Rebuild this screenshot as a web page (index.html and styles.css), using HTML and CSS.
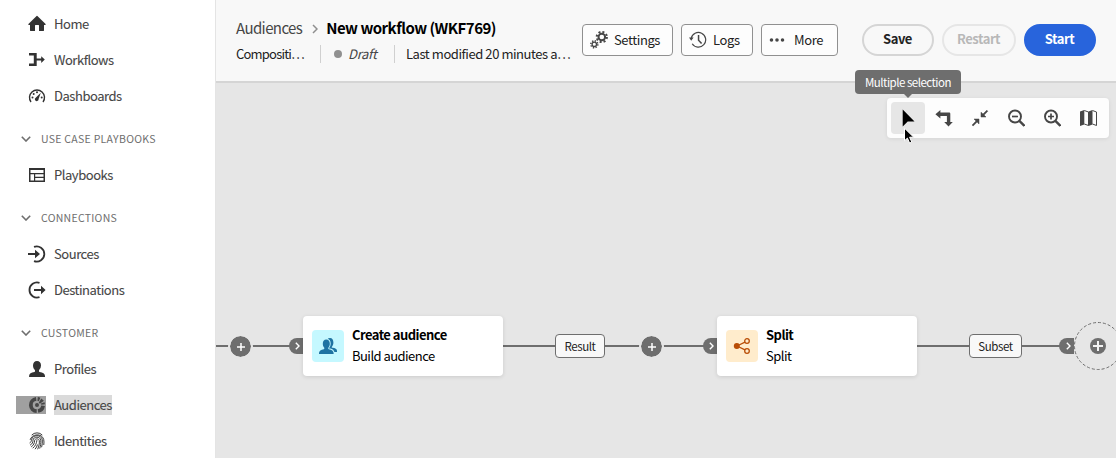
FILE: index.html
```html
<!DOCTYPE html>
<html lang="en">
<head>
<meta charset="utf-8">
<title>New workflow (WKF769)</title>
<link rel="stylesheet" href="styles.css">
</head>
<body>
<div class="app">
  <nav class="sidebar">
    <a class="nav-item"><svg class="icon" viewBox="0 0 18 18"><path d="M17.6 9 9.4 1a.6.6 0 0 0-.8 0L.4 9c-.3.4-.1.9.4.9H2v5.6c0 .3.200.5.5.5H7v-5.500c0-.3.200-.5.5-.5h3c.3 0 .5.200.5.5V16h4.500c.3 0 .5-.2.5-.5V9.900h1.200c.5 0 .7-.5.400-.9z"/></svg><span>Home</span></a>
    <a class="nav-item"><svg class="icon" viewBox="0 0 18 18"><path d="M1 2h7.700v5.600h4.500V5.200L16.800 8.600l-3.600 3.400V9.600H8.700V15H1v-2.600h4.800V4.600H1z"/></svg><span>Workflows</span></a>
    <a class="nav-item"><svg class="icon" viewBox="0 0 18 18"><path d="M3 15A7.500 7.500 0 1 1 15 15" fill="none" stroke="#323232" stroke-width="1.400"/><path d="M12.800 5.800 10.600 12a1.900 1.900 0 1 1-2.900-1.300z"/><circle cx="4.500" cy="10.500" r="1"/><circle cx="5.700" cy="7" r="1"/><circle cx="9" cy="5.300" r="1"/><circle cx="13.700" cy="10.500" r="1"/></svg><span>Dashboards</span></a>

    <div class="nav-section"><svg class="chevron" viewBox="0 0 10 6"><path d="m.8.8 4.200 4.200L9.200.8"/></svg><span>USE CASE PLAYBOOKS</span></div>
    <a class="nav-item"><svg class="icon" viewBox="0 0 18 18"><path fill-rule="evenodd" d="M1 2h16v14H1zm1.500 2V7h13V4zm0 4.200v6.300H6V8.200zm4.700 0v2.600h8.300V8.200zm0 3.700v2.600h8.300v-2.600z"/></svg><span>Playbooks</span></a>

    <div class="nav-section"><svg class="chevron" viewBox="0 0 10 6"><path d="m.8.8 4.200 4.200L9.200.8"/></svg><span>CONNECTIONS</span></div>
    <a class="nav-item"><svg class="icon" viewBox="0 0 18 18"><path d="M6 1.900A7.600 7.600 0 1 1 6 16.100" fill="none" stroke="#323232" stroke-width="1.800"/><path d="M0 8h7V4.800L12 9l-5 4.200V10H0z"/></svg><span>Sources</span></a>
    <a class="nav-item"><svg class="icon" viewBox="0 0 18 18"><path d="M11.500 1.800A7.600 7.600 0 1 0 11.500 16.200" fill="none" stroke="#323232" stroke-width="1.800"/><path d="M6 8h7V4.800L17.600 9 13 13.200V10H6z"/></svg><span>Destinations</span></a>

    <div class="nav-section"><svg class="chevron" viewBox="0 0 10 6"><path d="m.8.8 4.200 4.200L9.200.8"/></svg><span>CUSTOMER</span></div>
    <a class="nav-item"><svg class="icon" viewBox="0 0 18 18"><path d="M11 11.300v-.9c0-.3.100-.500.300-.700A6 6 0 0 0 13 5.500C13 2.700 11.500 1 9 1S5 2.800 5 5.500c0 1.700.7 3.300 1.700 4.200.2.200.300.400.300.700v.9c0 .3-.200.600-.600.600-3.200.400-5.300 1.800-5.300 4.100v1h15.900v-1c0-2.200-2.200-3.800-5.400-4.100-.4 0-.6-.3-.6-.6z"/></svg><span>Profiles</span></a>
    <a class="nav-item selected"><span class="icon-wrap"><svg class="icon" viewBox="0 0 18 18"><g fill="none" stroke="#464646" stroke-width="3.800"><path d="M8.700 15.100A6.100 6.100 0 0 1 8.200 2.950M15.050 9.800A6.100 6.100 0 0 1 10 15M9.600 2.950A6.100 6.100 0 0 1 11.600 3.500M14.700 6.900A6.100 6.100 0 0 1 15.100 8.500"/></g><circle cx="9" cy="9" r="2"/><path d="m10.800 6.600 2.500-4.200 2.600 2.300-4 3z"/></svg></span><span class="selected-text">Audiences</span></a>
    <a class="nav-item"><svg class="icon" viewBox="0 0 18 18"><g fill="none" stroke="#323232" stroke-width=".95" stroke-linecap="round"><path d="M4 2.800a7 7 0 0 1 10 0M2.200 7.500C3.500 1.800 14 .8 15.700 7.400c.4 1.600.3 3.600.1 5.200M2 10.800c1-.5 1.400-1.800 1.500-3 .8-5.500 10.200-5.500 10.800.2.200 2.500 0 4.800-.6 6.900M2.400 13c2-1 2.500-2.800 2.600-4.800.3-4 7.400-4 7.800 0 .2 3-.2 5.600-1 8M3.500 14.700c2.200-1.500 3-3.700 3.100-6.200.1-2.100 4.500-2.300 4.700.2.200 3-.3 5.700-1.500 8.200M5 16c2.400-2 3.500-4.500 3.900-7.500M7.300 16.900c1-1.200 1.700-2.500 2.100-4"/></g></svg><span>Identities</span></a>
  </nav>

  <main class="main">
    <header class="header">
      <div class="heading">
        <div class="crumbs">
          <span class="crumb">Audiences</span>
          <svg class="crumb-sep" viewBox="0 0 6 10"><path d="m1 1 4 4-4 4"/></svg>
          <h1 class="title">New workflow (WKF769)</h1>
        </div>
        <div class="meta">
          <span class="meta-type">Compositi…</span>
          <span class="meta-status"><i class="dot"></i><em>Draft</em></span>
          <span class="meta-date">Last modified 20 minutes a…</span>
        </div>
      </div>
      <div class="tools">
        <button class="btn btn-settings"><svg class="icon" viewBox="0 0 18 18"><circle cx="11.800" cy="6" r="3.300" fill="none" stroke="#464646" stroke-width="2"/><circle cx="11.800" cy="6" r="5.100" fill="none" stroke="#464646" stroke-width="2" stroke-dasharray="2 2.005"/><circle cx="4.300" cy="13.300" r="2.200" fill="none" stroke="#464646" stroke-width="1.300"/><circle cx="4.300" cy="13.300" r="3.500" fill="none" stroke="#464646" stroke-width="1.500" stroke-dasharray="1.350 1.399"/></svg><span>Settings</span></button>
        <button class="btn btn-logs"><svg class="icon" viewBox="0 0 18 18"><path d="M2.200 7.500a7.300 7.300 0 1 1 1 5.200" fill="none" stroke="#464646" stroke-width="1.200"/><path d="M0 6.600h4.600L2.200 9.700zM8.800 4h1.500v5l2.900 2.900-1.200 1.200-3.200-3.500z"/></svg><span>Logs</span></button>
        <button class="btn btn-more"><svg class="icon" viewBox="0 0 18 18"><circle cx="2.800" cy="9" r="2"/><circle cx="9" cy="9" r="2"/><circle cx="15.200" cy="9" r="2"/></svg><span>More</span></button>
      </div>
      <div class="actions">
        <button class="pill save">Save</button>
        <button class="pill restart">Restart</button>
        <button class="pill start">Start</button>
      </div>
    </header>

    <section class="canvas">
      <div class="link link-a"></div>
      <div class="link link-b"></div>
      <div class="link link-c"></div>

      <div class="add add-a"><svg viewBox="0 0 8 8"><path d="M4 0v8M0 4h8"/></svg></div>
      <div class="inlet inlet-a"><svg viewBox="0 0 5 8"><path d="m.8.8 3.200 3.200L.8 7.200"/></svg></div>
      <article class="node node-audience">
        <div class="node-icon teal"><svg class="icon" viewBox="0 0 18 18"><path d="M12.800 10.500v-.6c.9-.9 1.600-2.300 1.600-4.300C14.400 2.900 13.200 1 11 1 8.500 1 8 3 8 5.600c0 2 .6 3.400 1.500 4.300v2L15 15h3v-1.200c0-1.700-1.900-2.700-4.400-3-.5 0-.8-.1-.8-.3z"/><path d="M9.300 11.600v-.8c.9-.9 1.500-2.300 1.500-4C10.800 4.200 9.600 2.500 7.300 2.500S3.800 4.200 3.800 6.800c0 1.700.600 3.100 1.500 4v.8c0 .300-.200.600-.5.600C2 12.600 0 14 0 16v1h14.600v-1c0-2-2-3.400-4.800-3.800-.300 0-.5-.300-.5-.6z" stroke="#c5f8ff" stroke-width="1.800" paint-order="stroke"/></svg></div>
        <div class="node-text"><strong>Create audience</strong><span>Build audience</span></div>
      </article>
      <div class="label label-result">Result</div>
      <div class="add add-b"><svg viewBox="0 0 8 8"><path d="M4 0v8M0 4h8"/></svg></div>
      <div class="inlet inlet-b"><svg viewBox="0 0 5 8"><path d="m.8.8 3.200 3.200L.8 7.200"/></svg></div>
      <article class="node node-split">
        <div class="node-icon orange"><svg class="icon" viewBox="0 0 18 18"><path d="m4 9 9-4.300M4 9l9 4.300" stroke="#b94d05" stroke-width="1.300"/><circle cx="3.800" cy="9" r="3"/><circle cx="14" cy="4" r="2.300" fill="#ffeccc" stroke="#b94d05" stroke-width="1.300"/><circle cx="14" cy="14" r="2.300" fill="#ffeccc" stroke="#b94d05" stroke-width="1.300"/></svg></div>
        <div class="node-text"><strong>Split</strong><span>Split</span></div>
      </article>
      <div class="label label-subset">Subset</div>
      <div class="inlet inlet-c"><svg viewBox="0 0 5 8"><path d="m.8.8 3.200 3.200L.8 7.200"/></svg></div>
      <svg class="drop" viewBox="0 0 48 48"><circle cx="24" cy="24" r="23.500" fill="none" stroke="#6e6e6e" stroke-dasharray="3 2"/><circle cx="24" cy="24" r="8"/><path d="M24 19v10M19 24h10" stroke="#f2f2f2" stroke-width="2"/></svg>

      <div class="toolbar">
        <button class="tool active"><svg class="icon" viewBox="0 0 18 18"><path d="M3.700.6v16.800l5-5h6.800z" fill="#000"/></svg></button>
        <button class="tool"><svg class="icon" viewBox="0 0 18 18"><path d="M.4 5.200 5.400 1v2.500H14c.8 0 1.300.5 1.300 1.300V13h2.500L13.500 17.500 9.200 13h2.700V6.900H5.400v2.500z"/></svg></button>
        <button class="tool"><svg class="icon" viewBox="0 0 18 18"><path d="M10 3.200V8h5l-1.900-1.900 3.700-3.900-1-1L12 5zM3 10h5v5l-1.900-1.900-4 3.900-1-1 3.900-4z" stroke="#464646" stroke-width=".5"/></svg></button>
        <button class="tool"><svg class="icon" viewBox="0 0 18 18"><g fill="none" stroke="#464646"><circle cx="8" cy="7.500" r="6" stroke-width="1.900"/><path d="m12.400 11.900 5 5" stroke-width="2.300"/><path d="M5 7.500h6" stroke-width="1.700"/></g></svg></button>
        <button class="tool"><svg class="icon" viewBox="0 0 18 18"><g fill="none" stroke="#464646"><circle cx="8" cy="7.500" r="6" stroke-width="1.900"/><path d="m12.400 11.900 5 5" stroke-width="2.300"/><path d="M5 7.500h6M8 4.500v6" stroke-width="1.700"/></g></svg></button>
        <button class="tool"><svg class="icon" viewBox="0 0 18 18"><path d="M1 2.500 5.300 1v14.500L1 17zM9.500 2.500l4-1.500v14.500l-4 1.500z"/><path d="M5.300 1.500 9.500 3v13.500l-4.200-1.500M13.500 1.500l4 1.500v13.500l-4-1.500" fill="none" stroke="#464646"/></svg></button>
      </div>
      <div class="tooltip">Multiple selection</div>
      <svg class="cursor" viewBox="0 0 12 18"><path d="M1.500 1.200v12.600l2.900-2.700 2.200 5 2.200-1-2.200-4.900h4.100z" fill="#000" stroke="#fff"/></svg>
    </section>
  </main>
</div>
</body>
</html>
```

FILE: styles.css
```css
* { box-sizing: border-box; }
body {
  margin: 0;
  font-family: "Noto Sans CJK SC", "Noto Sans", sans-serif;
  font-size: 13px;
  line-height: 18px;
  color: #222;
}
button { font: inherit; margin: 0; }
.app { display: flex; width: 1116px; height: 458px; overflow: hidden; background: #fff; }
.icon { display: block; width: 18px; height: 18px; fill: #323232; flex: none; }

/* Sidebar */
.sidebar { width: 216px; flex: none; padding-top: 6px; border-right: 1px solid #e4e4e4; }
.nav-item { display: flex; align-items: center; gap: 8px; height: 36px; padding-left: 28px; color: #464646; font-size: 13px; letter-spacing: -.46px; -webkit-text-stroke: .1px #464646; }
.nav-section { display: flex; align-items: center; gap: 10px; height: 43px; padding: 7px 0 0 21px; color: #6e6e6e; font-size: 10.500px; letter-spacing: .28px; }
.chevron { width: 10px; height: 6px; fill: none; stroke: #6e6e6e; stroke-width: 1.6; }
.selected { padding-left: 16px; }
.icon-wrap { padding-left: 12px; background: #a0a0a0; }
.icon-wrap .icon { fill: #464646; }
.selected-text { height: 20px; line-height: 20px; background: #dadada; }

/* Header */
.main { flex: 1; min-width: 0; display: flex; flex-direction: column; }
.header { display: flex; height: 83px; flex: none; padding: 18px 20px 0; background: #f8f8f8; border-bottom: 2px solid #d5d5d5; }
.heading { width: 346px; flex: none; white-space: nowrap; }
.crumbs { display: flex; align-items: center; height: 22px; padding-bottom: 2px; }
.crumb { font-size: 15px; letter-spacing: -.6px; color: #464646; }
.crumb-sep { width: 6px; height: 10px; margin: 1px 8px 0 10px; fill: none; stroke: #8e8e8e; stroke-width: 1.5; }
.title { margin: 0; font-size: 15px; font-weight: 700; letter-spacing: -.52px; color: #000; }
.meta { display: flex; align-items: center; height: 18px; margin-top: 5px; font-size: 13px; letter-spacing: -.44px; }
.meta-type { width: 84px; letter-spacing: -.8px; }
.meta-status { display: flex; align-items: center; gap: 6px; width: 75px; height: 18px; margin-right: 1px; padding-left: 13px; border: solid #d0d0d0; border-width: 0 1px; color: #464646; letter-spacing: -.3px; }
.dot { width: 8px; height: 8px; border-radius: 50%; background: #909090; }
.meta-date { padding-left: 10px; }
.tools { display: flex; gap: 8px; padding-top: 6px; }
.btn { display: flex; align-items: center; gap: 6px; height: 32px; padding: 0 0 0 7px; border: 1px solid #909090; border-radius: 4px; background: #fdfdfd; color: #222; font-size: 13px; letter-spacing: -.4px; }
.btn .icon { fill: #464646; }
.btn-settings { width: 91px; }
.btn-logs { width: 72px; }
.btn-more { width: 77px; gap: 9px; }
.btn-more .icon { width: 16px; }
.actions { display: flex; gap: 8px; padding: 6px 0 0 24px; }
.pill { height: 32px; padding: 0 1px 2px 0; border: 2px solid #d5d5d5; border-radius: 16px; background: transparent; font-weight: 700; font-size: 13px; letter-spacing: -.45px; color: #222; }
.save { width: 72px; }
.restart { width: 74px; border-color: #e6e6e6; color: #b8b8b8; }
.start { width: 72px; border-color: #2864dc; background: #2864dc; color: #fff; }

/* Canvas: origin is x=216, y=83 of the window */
.canvas { position: relative; flex: 1; background: #e6e6e6; }
.link { position: absolute; top: 262px; height: 2px; background: #6e6e6e; }
.link-a { left: 0; width: 80px; }
.link-b { left: 287px; width: 208px; }
.link-c { left: 701px; width: 146px; }
.add { position: absolute; top: 251px; display: flex; align-items: center; justify-content: center; width: 25px; height: 25px; border: 2px solid #e6e6e6; border-radius: 50%; background: #6e6e6e; background-clip: padding-box; }
.add svg { width: 8px; height: 8px; stroke: #fff; stroke-width: 1.5; }
.add-a { left: 12px; }
.add-b { left: 423px; }
.inlet { position: absolute; top: 255px; display: flex; align-items: center; justify-content: center; width: 14px; height: 16px; padding-left: 3px; border-radius: 8px 0 0 8px; background: #6e6e6e; }
.inlet svg { width: 5px; height: 8px; fill: none; stroke: #fff; stroke-width: 1.4; }
.inlet-a { left: 73px; }
.inlet-b { left: 487px; }
.inlet-c { left: 843px; width: 15px; }
.node { position: absolute; top: 233px; display: flex; align-items: center; gap: 8px; width: 200px; height: 60px; padding-left: 9px; border-radius: 4px; background: #fff; box-shadow: 0 1px 4px rgba(0, 0, 0, .12); color: #000; }
.node-audience { left: 87px; }
.node-split { left: 501px; }
.node-icon { display: flex; align-items: center; justify-content: center; width: 32px; height: 32px; border-radius: 4px; }
.teal { background: #c5f8ff; }
.teal .icon { fill: #1f73a2; }
.orange { background: #ffeccc; }
.orange .icon { fill: #b94d05; }
.node-text { display: flex; flex-direction: column; gap: 2px; padding-bottom: 2px; font-size: 13px; letter-spacing: -.54px; }
.node-text > * { height: 19px; line-height: 19px; }
.label { position: absolute; top: 251px; height: 24px; border: 1px solid #6e6e6e; border-radius: 4px; background: #f8f8f8; font-size: 11.500px; letter-spacing: -.4px; line-height: 22px; text-align: center; }
.label-result { left: 339px; width: 50px; }
.label-subset { left: 753px; width: 53px; }
.drop { position: absolute; left: 858px; top: 239px; width: 48px; height: 48px; fill: #6e6e6e; }

/* Canvas toolbar */
.toolbar { position: absolute; left: 671px; top: 15px; display: flex; gap: 2px; width: 222px; height: 40px; padding: 4px; border-radius: 4px; background: #fdfdfd; box-shadow: 0 1px 4px rgba(0, 0, 0, .08); }
.tool { display: flex; align-items: center; justify-content: center; width: 34px; height: 32px; padding: 0; border: 0; border-radius: 4px; background: transparent; }
.tool .icon { fill: #464646; }
.active { background: #e6e6e6; }
.tooltip { position: absolute; left: 639px; top: -13px; width: 106px; height: 24px; border-radius: 4px; background: #6e6e6e; color: #fff; font-size: 11.500px; letter-spacing: -.5px; line-height: 24px; text-align: center; }
.tooltip::after { content: ""; position: absolute; left: 49px; top: 24px; border: 4px solid transparent; border-top-color: #6e6e6e; border-bottom: 0; }
.cursor { position: absolute; left: 687px; top: 44px; width: 12px; height: 18px; }
```
